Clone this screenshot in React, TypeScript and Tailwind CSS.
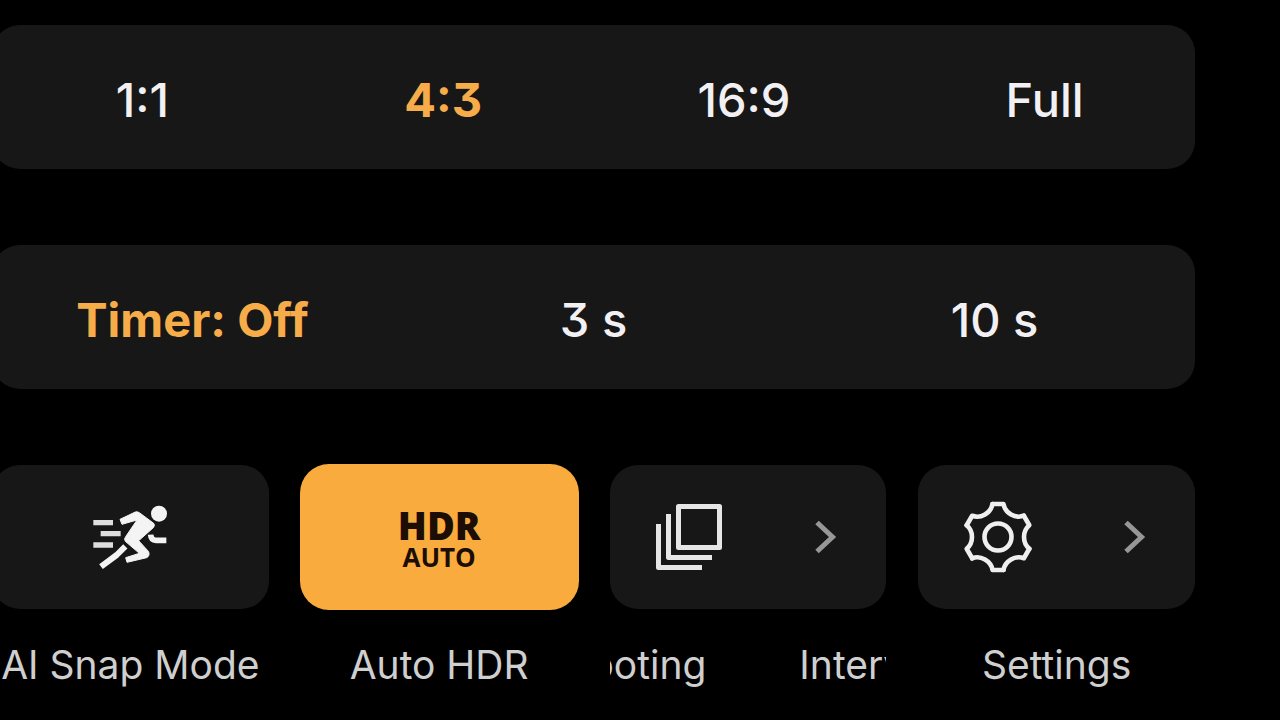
import type { ReactNode } from "react";

type Option = { label: string; active?: boolean };

const ratios: Option[] = [
  { label: "1:1" },
  { label: "4:3", active: true },
  { label: "16:9" },
  { label: "Full" },
];

const timers: Option[] = [
  { label: "Timer: Off", active: true },
  { label: "3 s" },
  { label: "10 s" },
];

function Segmented({ name, options, columns }: { name: string; options: Option[]; columns: string }) {
  return (
    <div role="group" aria-label={name} className={`grid h-36 rounded-[28px] bg-[#171717] ${columns}`}>
      {options.map((o) => (
        <button
          key={o.label}
          type="button"
          aria-pressed={!!o.active}
          className={
            o.active
              ? "pt-1 text-center text-[47px] leading-none font-bold text-[#f6ad49]"
              : "pt-1 text-center text-[47px] leading-none font-medium text-[#f2f0f2]"
          }
        >
          {o.label}
        </button>
      ))}
    </div>
  );
}

function RunnerIcon() {
  return (
    <svg aria-hidden="true" className="h-[70px] w-[78px]" viewBox="95 65 234 210" fill="none" stroke="#f4f4f4">
      <path d="M102 127H161M124 160H184M102 194H161" stroke="#dedede" strokeWidth="16" />
      <circle cx="299" cy="100" r="24" fill="#f4f4f4" stroke="none" />
      <path
        d="M182 117L228 95Q234 93 240 97L283 129Q288 135 282 142L238 181L268 214Q272 227 262 232L203 246L199 232L240 219L198 183Q193 176 199 169L233 119L188 132Z"
        fill="#f4f4f4"
        strokeWidth="3"
        strokeLinejoin="round"
      />
      <path d="M198 198L172 224L125 259" strokeWidth="18" strokeLinejoin="round" />
      <path d="M274 163Q275 180 290 180H321" strokeWidth="17" />
    </svg>
  );
}

function StackIcon() {
  return (
    <svg aria-hidden="true" className="h-[68px] w-[68px]" viewBox="0 0 68 68" fill="none" stroke="#e6e6e6" strokeWidth="5">
      <path d="M23.500 3.500H64.500V44.500H23.500Z" strokeLinejoin="round" />
      <path d="M13.500 11V54.500H57" strokeLinejoin="round" />
      <path d="M3.500 21V64.500H47" strokeLinejoin="round" />
    </svg>
  );
}

function GearIcon() {
  return (
    <svg
      aria-hidden="true"
      className="h-[72px] w-[72px]"
      viewBox="-36 -36 72 72"
      fill="none"
      stroke="#efefef"
      strokeWidth="4.600"
      strokeLinecap="round"
      strokeLinejoin="round"
    >
      {[0, 60, 120, 180, 240, 300].map((angle) => (
        <path
          key={angle}
          transform={`rotate(${angle})`}
          d="M-5.500 -33L5.500 -33C6.900 -24 17.300 -18 25.800 -21.300"
        />
      ))}
      <circle r="13.500" />
    </svg>
  );
}

function Chevron() {
  return (
    <svg aria-hidden="true" className="h-9 w-6" viewBox="0 0 24 36" fill="none" stroke="#979797" strokeWidth="5">
      <path d="M3 3.500L18.500 18L3 32.500" />
    </svg>
  );
}

function Tile({ label, caption, active, children }: { label: string; caption?: ReactNode; active?: boolean; children: ReactNode }) {
  return (
    <div className="min-w-0">
      <button
        type="button"
        aria-label={label}
        className={
          active
            ? "flex h-36 w-full flex-col items-center justify-center rounded-[28px] bg-[#faab3d] ring-1 ring-[#faab3d]"
            : "flex h-36 w-full items-center justify-center rounded-[28px] bg-[#171717]"
        }
      >
        {children}
      </button>
      <div className="mt-8 text-center text-[39px] leading-[48px] whitespace-nowrap text-[#cfcfcf]">
        {caption ?? label}
      </div>
    </div>
  );
}

export default function App() {
  return (
    <div className="min-h-screen overflow-hidden bg-black pt-[25px] pr-[85px] font-['Inter','Liberation_Sans',sans-serif] [font-feature-settings:'cv09']">
      <main className="-ml-2 flex flex-col gap-[76px]">
        <Segmented name="Aspect ratio" options={ratios} columns="grid-cols-4" />
        <Segmented name="Timer" options={timers} columns="grid-cols-3" />
        <div className="grid grid-cols-4 gap-8">
          <Tile label="AI Snap Mode">
            <RunnerIcon />
          </Tile>
          <Tile label="Auto HDR" active>
            <span className="pt-1 font-['Open_Sans','Noto_Sans',sans-serif] text-[38px] leading-9 font-extrabold text-[#1c0d05]">HDR</span>
            <span className="font-['Open_Sans','Noto_Sans',sans-serif] text-[26px] leading-7 font-bold text-[#1c0d05]">AUTO</span>
          </Tile>
          <Tile
            label="Interval shooting"
            caption={
              <div className="flex gap-[93px]">
                <span className="flex w-[35%] shrink-0 justify-end overflow-hidden">Interval shooting</span>
                <span className="min-w-0 flex-1 overflow-hidden text-left" aria-hidden="true">Interval shooting</span>
              </div>
            }
          >
            <span className="flex w-full items-center justify-between pr-12 pl-[45px]">
              <StackIcon />
              <Chevron />
            </span>
          </Tile>
          <Tile label="Settings">
            <span className="flex w-full items-center justify-between pr-12 pl-11">
              <GearIcon />
              <Chevron />
            </span>
          </Tile>
        </div>
      </main>
    </div>
  );
}
